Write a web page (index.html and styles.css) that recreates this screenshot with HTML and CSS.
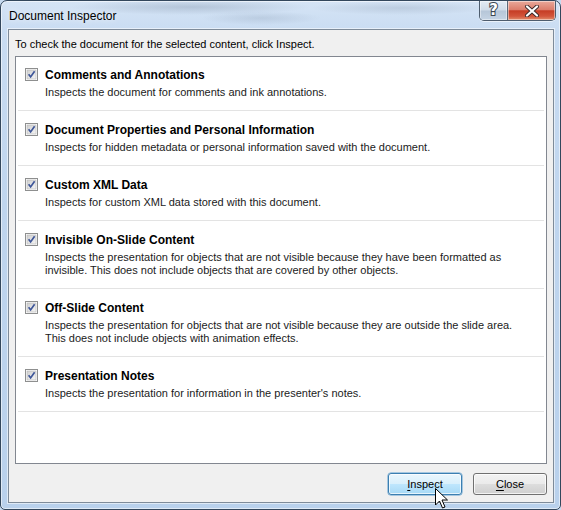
FILE: index.html
```html
<!DOCTYPE html>
<html lang="en">
<head>
<meta charset="utf-8">
<title>Document Inspector</title>
<link rel="stylesheet" href="styles.css">
</head>
<body>
<div class="window">
  <div class="titlebar">
    <span class="title">Document Inspector</span>
    <div class="caption-buttons">
      <div class="cap-btn help">
        <span class="help-glyph">?</span>
      </div>
      <div class="cap-btn close">
        <svg width="16" height="12" viewBox="0 0 16 12" aria-hidden="true">
          <path d="M3 1.5 L13 10.5 M13 1.5 L3 10.5" stroke="#3b2a2a" stroke-width="4" stroke-linecap="round"/>
          <path d="M3 1.5 L13 10.5 M13 1.5 L3 10.5" stroke="#ffffff" stroke-width="2.2" stroke-linecap="round"/>
        </svg>
      </div>
    </div>
  </div>

  <div class="client">
    <p class="intro">To check the document for the selected content, click Inspect.</p>

    <div class="listbox">
      <div class="item">
        <svg class="check" width="13" height="13" viewBox="0 0 13 13" aria-hidden="true"><use href="#cb"/></svg>
        <div class="item-text">
          <div class="item-title">Comments and Annotations</div>
          <div class="item-desc">Inspects the document for comments and ink annotations.</div>
        </div>
      </div>
      <div class="item">
        <svg class="check" width="13" height="13" viewBox="0 0 13 13" aria-hidden="true"><use href="#cb"/></svg>
        <div class="item-text">
          <div class="item-title">Document Properties and Personal Information</div>
          <div class="item-desc">Inspects for hidden metadata or personal information saved with the document.</div>
        </div>
      </div>
      <div class="item">
        <svg class="check" width="13" height="13" viewBox="0 0 13 13" aria-hidden="true"><use href="#cb"/></svg>
        <div class="item-text">
          <div class="item-title">Custom XML Data</div>
          <div class="item-desc">Inspects for custom XML data stored with this document.</div>
        </div>
      </div>
      <div class="item">
        <svg class="check" width="13" height="13" viewBox="0 0 13 13" aria-hidden="true"><use href="#cb"/></svg>
        <div class="item-text">
          <div class="item-title">Invisible On-Slide Content</div>
          <div class="item-desc">Inspects the presentation for objects that are not visible because they have been formatted as<br>invisible. This does not include objects that are covered by other objects.</div>
        </div>
      </div>
      <div class="item">
        <svg class="check" width="13" height="13" viewBox="0 0 13 13" aria-hidden="true"><use href="#cb"/></svg>
        <div class="item-text">
          <div class="item-title">Off-Slide Content</div>
          <div class="item-desc">Inspects the presentation for objects that are not visible because they are outside the slide area.<br>This does not include objects with animation effects.</div>
        </div>
      </div>
      <div class="item">
        <svg class="check" width="13" height="13" viewBox="0 0 13 13" aria-hidden="true"><use href="#cb"/></svg>
        <div class="item-text">
          <div class="item-title">Presentation Notes</div>
          <div class="item-desc">Inspects the presentation for information in the presenter's notes.</div>
        </div>
      </div>
    </div>

    <div class="actions">
      <button class="btn btn-default"><u>I</u>nspect</button>
      <button class="btn"><u>C</u>lose</button>
    </div>
  </div>

  <!-- mouse pointer resting on the Inspect button -->
  <svg class="pointer" width="13" height="21" viewBox="0 0 13 21" aria-hidden="true">
    <path d="M0.5 0.5 V17 L4.5 13 L7.5 20 L10 19 L7 12 H12.5 Z" fill="#ffffff" stroke="#000000" stroke-width="1" stroke-linejoin="miter"/>
  </svg>
</div>

<!-- shared checked-checkbox glyph -->
<svg width="0" height="0" class="defs" aria-hidden="true">
  <defs>
    <linearGradient id="cbfill" x1="0" y1="0" x2="1" y2="1">
      <stop offset="0" stop-color="#cfcfcf"/>
      <stop offset="1" stop-color="#f6f6f6"/>
    </linearGradient>
    <g id="cb">
      <rect x="0.5" y="0.5" width="12" height="12" fill="#ffffff" stroke="#8e8f8f"/>
      <rect x="2" y="2" width="9" height="9" fill="url(#cbfill)" stroke="#b4b4b4" stroke-width="0.6"/>
      <path d="M3.6 6.3 L5.6 8.9 L9.6 3.2" fill="none" stroke="#3d5598" stroke-width="1.7"/>
    </g>
  </defs>
</svg>
</body>
</html>
```

FILE: styles.css
```css
* {
  box-sizing: border-box;
}

html, body {
  margin: 0;
  padding: 0;
  width: 561px;
  height: 510px;
  overflow: hidden;
  background: #c6daf0;
}

.defs {
  position: absolute;
  width: 0;
  height: 0;
}

.window {
  position: relative;
  width: 561px;
  height: 510px;
  display: flex;
  flex-direction: column;
  border: 1px solid #33475c;
  border-radius: 7px 7px 5px 5px;
  background:
    radial-gradient(ellipse 120px 8px at 190px 6px, rgba(70, 90, 115, 0.22), rgba(70, 90, 115, 0) 100%),
    radial-gradient(ellipse 90px 7px at 400px 7px, rgba(70, 90, 115, 0.16), rgba(70, 90, 115, 0) 100%),
    radial-gradient(ellipse 60px 7px at 260px 17px, rgba(70, 90, 115, 0.14), rgba(70, 90, 115, 0) 100%),
    linear-gradient(180deg, #d5e4f5 0%, #c9dcf2 6%, #bfd5ee 40%, #b9d1ec 100%);
  box-shadow: inset 0 0 0 1px rgba(255, 255, 255, 0.55);
  font-family: "Liberation Sans", Arial, sans-serif;
  font-size: 11px;
  color: #000;
}

/* caption */
.titlebar {
  height: 28px;
  flex: none;
  display: flex;
  align-items: flex-start;
  padding: 0 4px 0 8px;
}

.title {
  font-size: 12px;
  line-height: 16px;
  margin-top: 7px;
  color: #000;
  text-shadow: 0 0 6px rgba(255, 255, 255, 0.9);
}

.caption-buttons {
  margin-left: auto;
  display: flex;
  height: 20px;
  border: 1px solid #4e5d6e;
  border-top: none;
  border-radius: 0 0 5px 5px;
  overflow: hidden;
  box-shadow: 0 1px 0 rgba(255, 255, 255, 0.6);
}

.cap-btn {
  height: 19px;
  display: flex;
  align-items: center;
  justify-content: center;
  box-shadow: inset 0 0 0 1px rgba(255, 255, 255, 0.45);
}

.help {
  width: 28px;
  border-right: 1px solid #5a6878;
  background: linear-gradient(180deg, #e3ebf4 0%, #cfdbe8 48%, #b6c6d8 52%, #c5d4e4 100%);
}

.help-glyph {
  font-family: "DejaVu Sans", sans-serif;
  font-weight: bold;
  font-size: 15px;
  color: #ffffff;
  -webkit-text-stroke: 2px #3c4752;
  paint-order: stroke fill;
  line-height: 1;
}

.close {
  width: 47px;
  background: linear-gradient(180deg, #e9a99b 0%, #dc7e6c 45%, #c63d25 52%, #d2553b 80%, #e28f6e 100%);
}

/* dialog body */
.client {
  flex: 1;
  display: flex;
  flex-direction: column;
  margin: 0 6px 6px 7px;
  padding: 6px 6px 7px 6px;
  background: #f0f0f0;
  border: 1px solid #7e8b99;
  box-shadow: 0 0 0 1px rgba(255, 255, 255, 0.55);
}

.intro {
  margin: 0 0 4px;
  line-height: 16px;
}

.listbox {
  flex: 1;
  background: #ffffff;
  border: 1px solid #828790;
  padding: 0 2px;
}

.item {
  display: flex;
  align-items: flex-start;
  gap: 7px;
  padding: 11px 7px 11px 7px;
  border-bottom: 1px solid #e3e3e3;
}

.item:first-child {
  padding-top: 10px;
}

.check {
  flex: none;
  margin-top: 1px;
}

.item-title {
  font-weight: bold;
  font-size: 12px;
  line-height: 16px;
}

.item-desc {
  margin-top: 3px;
  line-height: 13px;
  white-space: nowrap;
  color: #1b1b1b;
}

/* buttons */
.actions {
  display: flex;
  justify-content: flex-end;
  gap: 11px;
  margin-top: 9px;
}

.btn {
  width: 74px;
  height: 22px;
  padding: 0;
  font: inherit;
  color: #000;
  border: 1px solid #707070;
  border-radius: 3px;
  background: linear-gradient(180deg, #f2f2f2 0%, #ebebeb 48%, #dddddd 52%, #cfcfcf 100%);
  box-shadow: inset 0 0 0 1px rgba(255, 255, 255, 0.75);
  line-height: 18px;
}

.btn u {
  text-decoration-thickness: 1px;
  text-underline-offset: 2px;
}

.btn-default {
  border-color: #3c7fb1;
  background: linear-gradient(180deg, #eaf6fd 0%, #d9f0fc 48%, #bee6fd 52%, #a7d9f5 100%);
  box-shadow: inset 0 0 0 1px rgba(255, 255, 255, 0.7), 0 0 0 0.5px #5b9ecf;
}

.pointer {
  position: absolute;
  left: 434px;
  top: 487px;
}
```
